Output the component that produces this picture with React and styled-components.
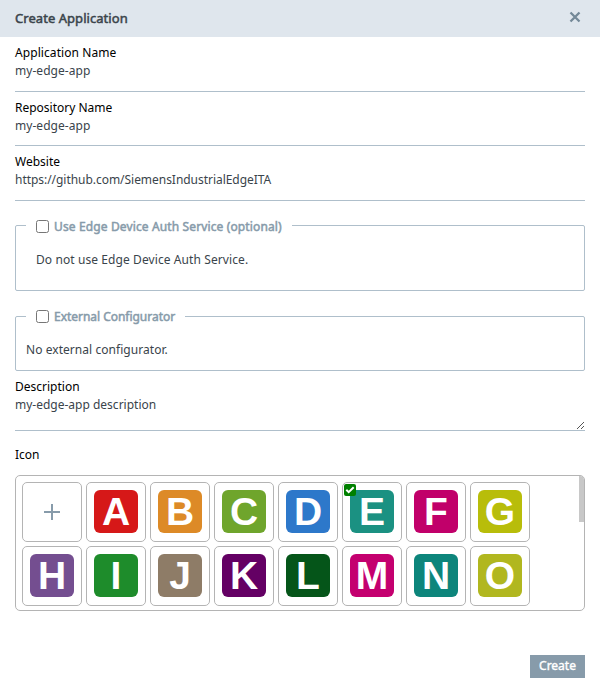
import React from "react";
import styled, { createGlobalStyle } from "styled-components";

const GlobalStyle = createGlobalStyle`
  *, *::before, *::after { box-sizing: border-box; }
  body { margin: 0; background: #fff; }
`;

const Dialog = styled.div`
  width: 600px;
  height: 684px;
  display: flex;
  flex-direction: column;
  background: #fff;
  color: #3a444b;
  font: 12px/18px "Noto Sans", "Open Sans", sans-serif;
  white-space: nowrap;
  overflow: hidden;
`;

const Header = styled.header`
  flex: none;
  height: 37px;
  padding: 0 19px 0 15px;
  display: flex;
  align-items: center;
  justify-content: space-between;
  background: #dfe6ed;
`;

const Title = styled.h1`
  margin: 0 0 2px;
  font-size: 13px;
  line-height: 18px;
  font-weight: 400;
  -webkit-text-stroke: 0.5px currentColor;
  letter-spacing: ${(p) => p.$spacing || 0}px;
`;

const CloseButton = styled.button`
  display: flex;
  border: 0;
  padding: 0;
  margin: 0 0 3px;
  background: none;
`;

const Form = styled.main`
  flex: none;
  padding: 7px 15px 0;
  display: flex;
  flex-direction: column;
`;

const Field = styled.div`
  height: ${(p) => p.$height}px;
  margin-bottom: ${(p) => p.$gap}px;
  display: flex;
  flex-direction: column;
  border-bottom: 1px solid #afbfcb;
`;

const Label = styled.label`
  height: 18px;
  color: #000;
  letter-spacing: ${(p) => p.$spacing || 0}px;
`;

const Value = styled.div`
  display: flex;
  justify-content: space-between;
  letter-spacing: ${(p) => p.$spacing || 0}px;
`;

const Grip = styled.svg`
  margin-top: 25px;
`;

const Group = styled.fieldset`
  height: ${(p) => p.$height}px;
  min-width: 0;
  margin: 0 0 ${(p) => p.$gap}px;
  padding: 0 0 0 ${(p) => p.$indent}px;
  border: 1px solid #afbfcb;
  border-radius: 2px;
`;

const Legend = styled.legend`
  height: ${(p) => (p.$compact ? 17 : 18)}px;
  margin-left: ${(p) => p.$shift}px;
  padding: ${(p) => (p.$compact ? 1 : 0)}px 10px 0;
  display: flex;
  align-items: center;
  gap: 5px;
  color: #879baa;
`;

const LegendText = styled.span`
  padding-top: 2px;
  -webkit-text-stroke: 0.5px currentColor;
  letter-spacing: ${(p) => p.$spacing || 0}px;
`;

const Checkbox = styled.input`
  width: 13px;
  height: 13px;
  margin: 0;
`;

const GroupText = styled.p`
  margin: ${(p) => p.$top || 16}px 0 0;
  letter-spacing: ${(p) => p.$spacing || 0}px;
`;

const IconPicker = styled.div`
  height: 136px;
  margin-top: 11px;
  display: flex;
  justify-content: space-between;
  border: 1px solid #b4b4b4;
  border-radius: 5px;
  overflow: hidden;
`;

const IconGrid = styled.div`
  padding: 6px;
  display: grid;
  grid-template-columns: repeat(8, 60px);
  grid-auto-rows: 60px;
  gap: 4px;
`;

const ScrollThumb = styled.div`
  width: 5px;
  height: 46px;
  background: #c8c8c8;
`;

const Tile = styled.div`
  position: relative;
  display: flex;
  justify-content: center;
  padding-top: 7px;
  border: 1px solid #b4b4b4;
  border-radius: 5px;
`;

const PlusIcon = styled.svg`
  margin-top: 14px;
`;

const Letter = styled.div`
  width: 44px;
  height: 43px;
  border-radius: 6px;
  background: ${(p) => p.$color};
  color: #fff;
  font: bold 39px/43px "Liberation Sans", Arial, sans-serif;
  text-align: center;
`;

const Selected = styled.span`
  position: absolute;
  left: 1px;
  top: 1px;
  width: 12px;
  height: 12px;
  display: flex;
  align-items: center;
  justify-content: center;
  border-radius: 2px;
  background: #008000;
`;

const Footer = styled.footer`
  display: flex;
  justify-content: flex-end;
  padding: 44px 15px 0;
`;

const CreateButton = styled.button`
  width: 55px;
  height: 23px;
  padding: 0 0 2px;
  border: 0;
  background: #879baa;
  color: #fff;
  font: 400 12px/18px "Noto Sans", "Open Sans", sans-serif;
  -webkit-text-stroke: 0.4px currentColor;
  letter-spacing: ${(p) => p.$spacing || 0}px;
`;

const icons = [
  ["A", "#d61818"], ["B", "#dd8a27"], ["C", "#6fa52c"], ["D", "#2d78ca"],
  ["E", "#1b9182"], ["F", "#c1006a"], ["G", "#b8bd0a"], ["H", "#744e90"],
  ["I", "#1e8c2b"], ["J", "#8e7c67"], ["K", "#640064"], ["L", "#055519"],
  ["M", "#c4006f"], ["N", "#0d857b"], ["O", "#b1b71f"],
];

export default function App() {
  return (
    <>
      <GlobalStyle />
      <Dialog>
        <Header>
          <Title $spacing={0.05}>Create Application</Title>
          <CloseButton aria-label="Close">
            <svg width="12" height="12" viewBox="0 0 12 12" stroke="#748998" strokeWidth="2.3">
              <path d="M1.5 1.5l9 9M10.5 1.5l-9 9" />
            </svg>
          </CloseButton>
        </Header>
        <Form>
          <Field $height={48} $gap={7}>
            <Label $spacing={0.08}>Application Name</Label>
            <Value $spacing={0.04}>my-edge-app</Value>
          </Field>
          <Field $height={47} $gap={7}>
            <Label>Repository Name</Label>
            <Value $spacing={0.04}>my-edge-app</Value>
          </Field>
          <Field $height={48} $gap={16}>
            <Label>Website</Label>
            <Value $spacing={-0.04}>https://github.com/SiemensIndustrialEdgeITA</Value>
          </Field>
          <Group $height={74} $gap={16} $indent={20}>
            <Legend $shift={-10} $compact>
              <Checkbox type="checkbox" />
              <LegendText $spacing={0.13}>Use Edge Device Auth Service (optional)</LegendText>
            </Legend>
            <GroupText $top={17} $spacing={0.09}>Do not use Edge Device Auth Service.</GroupText>
          </Group>
          <Group $height={64} $gap={7} $indent={10}>
            <Legend $shift={0}>
              <Checkbox type="checkbox" />
              <LegendText $spacing={-0.03}>External Configurator</LegendText>
            </Legend>
            <GroupText $spacing={0.05}>No external configurator.</GroupText>
          </Group>
          <Field $height={53} $gap={15}>
            <Label>Description</Label>
            <Value>
              <span>my-edge-app description</span>
              <Grip width="9" height="9" viewBox="0 0 9 9" stroke="#555" fill="none">
                <path d="M1 8l7-7M5 8l3-3" />
              </Grip>
            </Value>
          </Field>
          <Label>Icon</Label>
          <IconPicker>
            <IconGrid>
              <Tile>
                <PlusIcon width="16" height="16" viewBox="0 0 16 16" stroke="#879baa" strokeWidth="2">
                  <path d="M8 0v16M0 8h16" />
                </PlusIcon>
              </Tile>
              {icons.map(([letter, color]) => (
                <Tile key={letter}>
                  <Letter $color={color}>{letter}</Letter>
                  {letter === "E" && (
                    <Selected>
                      <svg width="10" height="8" viewBox="0 0 10 8" fill="none" stroke="#fff" strokeWidth="2">
                        <path d="M1.3 3.8l2.4 2.4 5-5" />
                      </svg>
                    </Selected>
                  )}
                </Tile>
              ))}
            </IconGrid>
            <ScrollThumb />
          </IconPicker>
        </Form>
        <Footer>
          <CreateButton>Create</CreateButton>
        </Footer>
      </Dialog>
    </>
  );
}
